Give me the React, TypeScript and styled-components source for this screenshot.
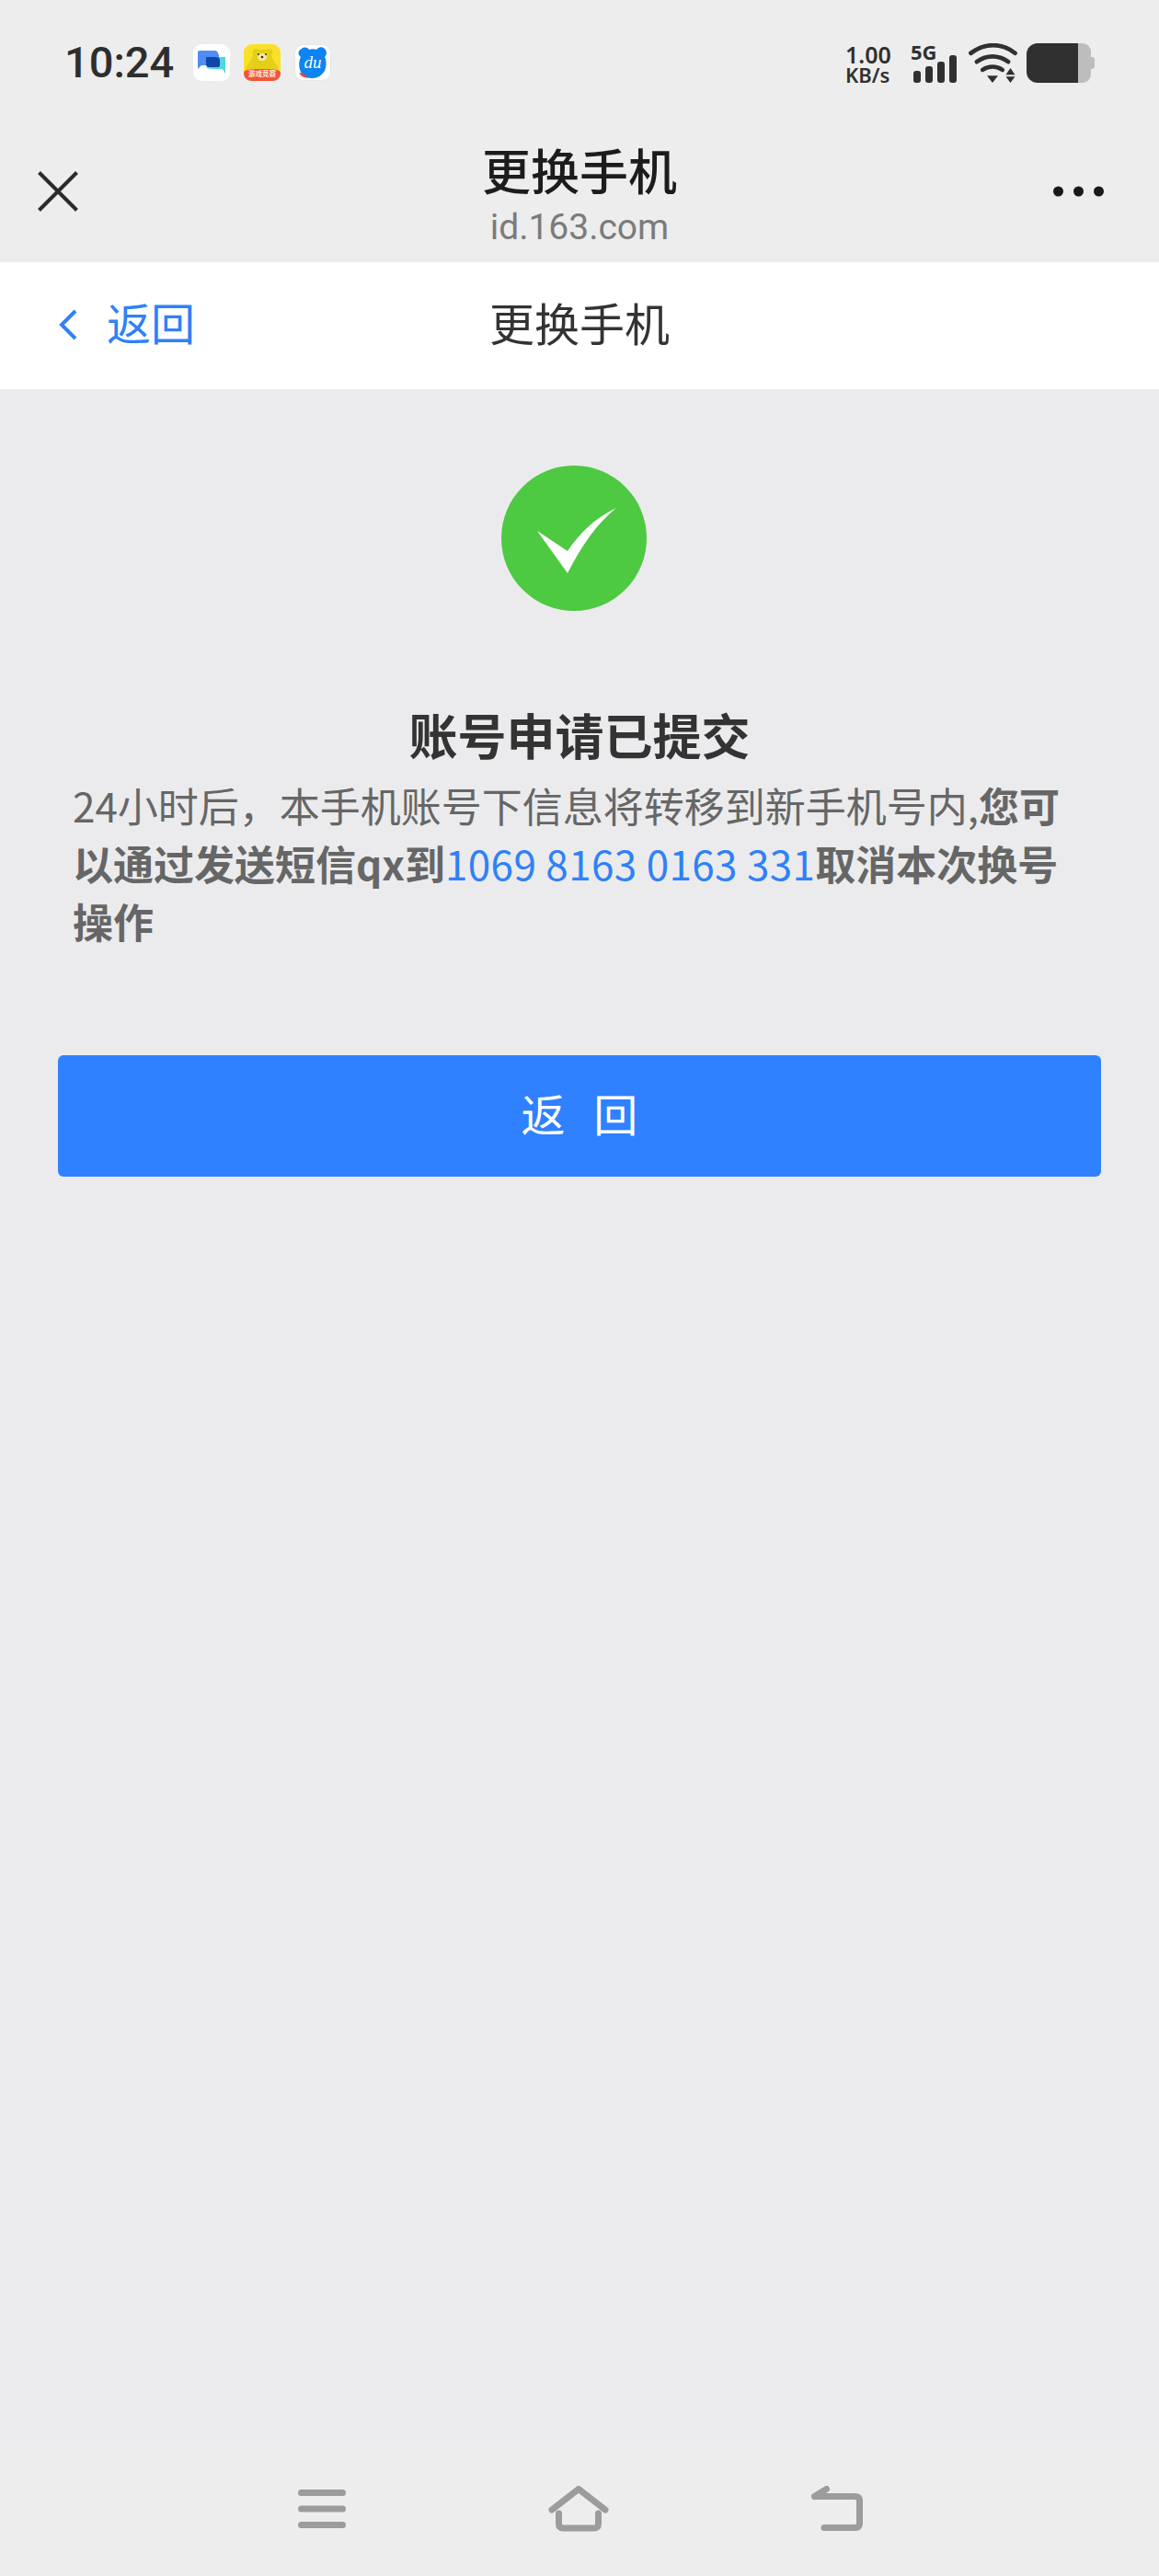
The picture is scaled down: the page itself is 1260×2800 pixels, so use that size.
import React from "react";
import styled, { createGlobalStyle } from "styled-components";

const cjk = `"Noto Sans CJK SC", "Noto Sans", sans-serif`;

const Global = createGlobalStyle`
  html, body { margin: 0; padding: 0; background: #ebebed; }
  #root { width: 1260px; height: 2800px; }
  * { box-sizing: border-box; }
`;

const Page = styled.div`
  width: 1260px;
  height: 2800px;
  display: flex;
  flex-direction: column;
  background: #ebebed;
  font-family: ${cjk};
`;

const Chrome = styled.header`
  height: 285px;
  flex: none;
  background: #ededed;
  display: flex;
  flex-direction: column;
`;

const StatusBar = styled.div`
  height: 136px;
  padding: 47px 70px 0 70px;
  display: flex;
  justify-content: space-between;
  align-items: flex-start;
`;

const StatusLeft = styled.div`
  display: flex;
  align-items: center;
  height: 42px;
`;

const Clock = styled.span`
  font-family: "Roboto", sans-serif;
  font-size: 47px;
  font-weight: 500;
  line-height: 42px;
  color: #2e2e2e;
  width: 140px;
`;

const AppIcons = styled.div`
  display: flex;
  gap: 15px;
`;

const AppTile = styled.svg`
  width: 40px;
  height: 40px;
  display: block;
`;

const StatusRight = styled.div`
  display: flex;
  align-items: flex-start;
  height: 42px;
`;

const Speed = styled.div`
  width: 71px;
  display: flex;
  flex-direction: column;
  color: #303030;
  font-family: "Noto Sans", sans-serif;
  font-weight: 600;
`;

const SpeedValue = styled.span`
  font-size: 25px;
  line-height: 24px;
  height: 25px;
`;

const SpeedUnit = styled.span`
  font-size: 22px;
  line-height: 18px;
`;

const Signal = styled.div`
  position: relative;
  width: 63px;
  height: 42px;
`;

const SignalLabel = styled.span`
  position: absolute;
  left: 0;
  top: -2px;
  font-family: "Noto Sans", sans-serif;
  font-size: 22px;
  font-weight: 700;
  line-height: 22px;
  color: #303030;
`;

const SignalBars = styled.svg`
  position: absolute;
  left: 3px;
  top: 13px;
`;

const WifiIcon = styled.svg`
  display: block;
  margin-right: 10px;
`;

const BatteryIcon = styled.svg`
  display: block;
`;

const Toolbar = styled.div`
  flex: 1;
  position: relative;
  display: flex;
  align-items: center;
  justify-content: space-between;
  padding: 0 60px 0 41px;
`;

const ToolbarIcon = styled.svg`
  display: block;
  margin-top: -5px;
`;

const TitleBlock = styled.div`
  position: absolute;
  left: 0;
  right: 0;
  top: 13px;
  display: flex;
  flex-direction: column;
  align-items: center;
`;

const PageTitle = styled.div`
  font-size: 53px;
  font-weight: 500;
  line-height: 70px;
  color: #1c1c1c;
`;

const PageHost = styled.div`
  font-family: "Roboto", sans-serif;
  font-size: 39px;
  line-height: 44px;
  margin-top: 6px;
  color: #7b7b7b;
`;

const NavBar = styled.nav`
  height: 138px;
  flex: none;
  background: #fff;
  position: relative;
  display: flex;
  align-items: center;
  padding: 0 0 2px 64px;
`;

const BackLink = styled.a`
  display: flex;
  align-items: center;
  gap: 32px;
  font-size: 48px;
  line-height: 60px;
  color: #2f81f7;
`;

const BackLabel = styled.span`
  position: relative;
  top: -4px;
`;

const NavTitle = styled.div`
  position: absolute;
  left: 0;
  right: 0;
  top: 0;
  bottom: 10px;
  display: flex;
  align-items: center;
  justify-content: center;
  font-size: 49px;
  color: #333;
  font-weight: 400;
`;

const Main = styled.main`
  flex: 1;
  display: flex;
  flex-direction: column;
  padding-top: 83px;
`;

const SuccessMark = styled.svg`
  display: block;
  align-self: center;
  margin-left: -12px;
`;

const Heading = styled.h1`
  margin: 104px 0 0;
  text-align: center;
  font-size: 53px;
  font-weight: 700;
  line-height: 60px;
  color: #333;
`;

const Message = styled.p`
  margin: 16px 0 0;
  padding: 0 79px;
  font-size: 44px;
  line-height: 63px;
  color: #666;
  word-break: break-all;
`;

const Phone = styled.a`
  font-weight: 400;
  color: #2f81f7;
  letter-spacing: 0.35px;
`;

const ReturnButton = styled.button`
  margin: 114px 63px 0;
  height: 132px;
  border: 0;
  border-radius: 6px;
  padding: 0 0 8px;
  background: #2f81ff;
  color: #fff;
  font-family: ${cjk};
  font-size: 48px;
  letter-spacing: 10px;
  text-indent: 10px;
`;

const SystemNav = styled.footer`
  height: 147px;
  flex: none;
  background: #ededed;
  display: flex;
  align-items: flex-start;
  justify-content: space-between;
  padding: 49px 321px 0 324px;
`;

const SystemIcon = styled.svg<{ $top?: number }>`
  display: block;
  fill: none;
  stroke: #9c9c9c;
  stroke-width: 7;
  stroke-linecap: round;
  stroke-linejoin: round;
  margin-top: ${(p) => p.$top ?? 0}px;
`;

export default function App() {
  return (
    <Page>
      <Global />
      <Chrome>
        <StatusBar>
          <StatusLeft>
            <Clock>10:24</Clock>
            <AppIcons>
              <AppTile viewBox="0 0 40 40">
                <rect width="40" height="40" rx="9" fill="#fff" />
                <path d="M14 26l6 1 12 0 3 5 0-5 0-13-8 0z" fill="#4fd8e0" />
                <path d="M5 9a2 2 0 0 1 2-2h17c2 0 3 2 4 5v6c0 3-2 5-5 5H9l-4 4z" fill="#4f8cf5" />
                <path d="M14 14h10c3 0 5 1 5 3v6c0 1-1 2-2 2H17c-2 0-3-1-3-3z" fill="#0f48a8" />
              </AppTile>
              <AppTile viewBox="0 0 40 40">
                <rect width="40" height="40" rx="9" fill="#fbe02a" />
                <path d="M10 7c2-3 5-2 6-1h9c1-1 4-2 6 1 1 2 0 4-1 5 1 6 6 9 8 15v6H2v-6c2-6 7-9 8-15-1-1-1-3 0-5z" fill="#e5cf18" />
                <ellipse cx="20" cy="14" rx="5" ry="4" fill="#f5eaa2" />
                <circle cx="16" cy="11" r="1" fill="#3a2f10" />
                <circle cx="24" cy="11" r="1" fill="#3a2f10" />
                <circle cx="20" cy="14" r="1.3" fill="#3a2f10" />
                <path d="M0 31c0-3 6-4 20-4s20 1 20 4c0 6-4 9-9 9H9c-5 0-9-3-9-9z" fill="#f1553b" />
                <text x="20" y="35" textAnchor="middle" fontSize="7.5" fontWeight="700" fill="#ffe9d8" fontFamily={cjk}>游戏竞赛</text>
              </AppTile>
              <AppTile viewBox="0 0 40 40">
                <rect x="0.5" y="0.5" width="39" height="39" rx="9" fill="#fff" stroke="#e6e6e6" />
                <path d="M8 5c3-3 7-1 8 1 3-1 6-1 8 0 2-3 6-4 9-1 3 3 2 7 0 9 2 3 2 10 0 15-3 5-8 8-13 8s-9-1-12-5C4 26 5 17 7 14 3 11 4 7 8 5z" fill="#0d84f2" />
                <text x="20" y="26" textAnchor="middle" fontSize="19" fontStyle="italic" fill="#fff" fontFamily="Liberation Serif, serif">du</text>
                <path d="M5 31c4 0 7 2 10 6-5-1-8-2-10-6z" fill="#e8483b" />
              </AppTile>
            </AppIcons>
          </StatusLeft>
          <StatusRight>
            <Speed>
              <SpeedValue>1.00</SpeedValue>
              <SpeedUnit>KB/s</SpeedUnit>
            </Speed>
            <Signal>
              <SignalLabel>5G</SignalLabel>
              <SignalBars width="47" height="30" viewBox="0 0 47 30">
                <rect x="0" y="17" width="8" height="13" rx="3" fill="#303030" />
                <rect x="13" y="12" width="8" height="18" rx="3" fill="#303030" />
                <rect x="26" y="7" width="8" height="23" rx="3" fill="#303030" />
                <rect x="39" y="0" width="8" height="30" rx="3" fill="#303030" />
              </SignalBars>
            </Signal>
            <WifiIcon width="53" height="43" viewBox="458 50 157 128">
              <g fill="none" stroke="#303030" strokeWidth="14" strokeLinecap="round">
                <path d="M465 82c45-34 100-34 143 0" />
                <path d="M484 110c32-23 70-23 102 0" />
                <path d="M503 136c20-13 44-13 64 0" />
              </g>
              <g fill="#303030">
                <path d="M517 155h36l-18 23z" />
                <path d="M578 152l15-22 15 22z" />
                <path d="M578 158h30l-15 20z" />
              </g>
            </WifiIcon>
            <BatteryIcon width="74" height="43" viewBox="0 0 74 43">
              <path d="M12 0h44v43H12A12 12 0 0 1 0 31V12A12 12 0 0 1 12 0z" fill="#303030" />
              <path d="M56 0h5a9 9 0 0 1 9 9v25a9 9 0 0 1-9 9h-5z" fill="#bdbdbd" />
              <path d="M70 15h1a3 3 0 0 1 3 3v7a3 3 0 0 1-3 3h-1z" fill="#bdbdbd" />
            </BatteryIcon>
          </StatusRight>
        </StatusBar>
        <Toolbar>
          <ToolbarIcon width="44" height="44" viewBox="0 0 44 44">
            <path d="M1.5 1.5l41 41M42.500 1.500l-41 41" stroke="#2b2b2b" strokeWidth="4" fill="none" />
          </ToolbarIcon>
          <TitleBlock>
            <PageTitle>更换手机</PageTitle>
            <PageHost>id.163.com</PageHost>
          </TitleBlock>
          <ToolbarIcon width="55" height="12" viewBox="0 0 55 12">
            <circle cx="5.5" cy="6" r="5.5" fill="#1a1a1a" />
            <circle cx="27.5" cy="6" r="5.5" fill="#1a1a1a" />
            <circle cx="49.5" cy="6" r="5.5" fill="#1a1a1a" />
          </ToolbarIcon>
        </Toolbar>
      </Chrome>
      <NavBar>
        <BackLink>
          <svg width="20" height="34" viewBox="0 0 20 34">
            <path d="M18 2L3 17l15 15" fill="none" stroke="#2f81f7" strokeWidth="4" />
          </svg>
          <BackLabel>返回</BackLabel>
        </BackLink>
        <NavTitle>更换手机</NavTitle>
      </NavBar>
      <Main>
        <SuccessMark width="158" height="158" viewBox="0 0 158 158">
          <circle cx="79" cy="79" r="79" fill="#4dc942" />
          <path d="M39 71l33 22c12-18 27-34 53-47-21 17-37 40-53 71z" fill="#fff" />
        </SuccessMark>
        <Heading>账号申请已提交</Heading>
        <Message>
          24小时后，本手机账号下信息将转移到新手机号内,<b>您可以通过发送短信qx到<Phone>1069 8163 0163 331</Phone>取消本次换号操作</b>
        </Message>
        <ReturnButton>返 回</ReturnButton>
      </Main>
      <SystemNav>
        <SystemIcon width="52" height="42" viewBox="0 0 52 42" $top={4}>
          <path d="M3.5 3.5h45M3.5 21h45M3.5 38.5h45" />
        </SystemIcon>
        <SystemIcon width="66" height="50" viewBox="0 0 66 50">
          <path d="M4 26L33 3.500 62 26M11.500 30v11q0 5 5 5h33q5 0 5-5V30" />
        </SystemIcon>
        <SystemIcon width="57" height="50" viewBox="0 0 57 50">
          <path d="M3.500 11.500h44q5 0 5 5v24q0 5-5 5H14M3.500 11.500l13-8" />
        </SystemIcon>
      </SystemNav>
    </Page>
  );
}
